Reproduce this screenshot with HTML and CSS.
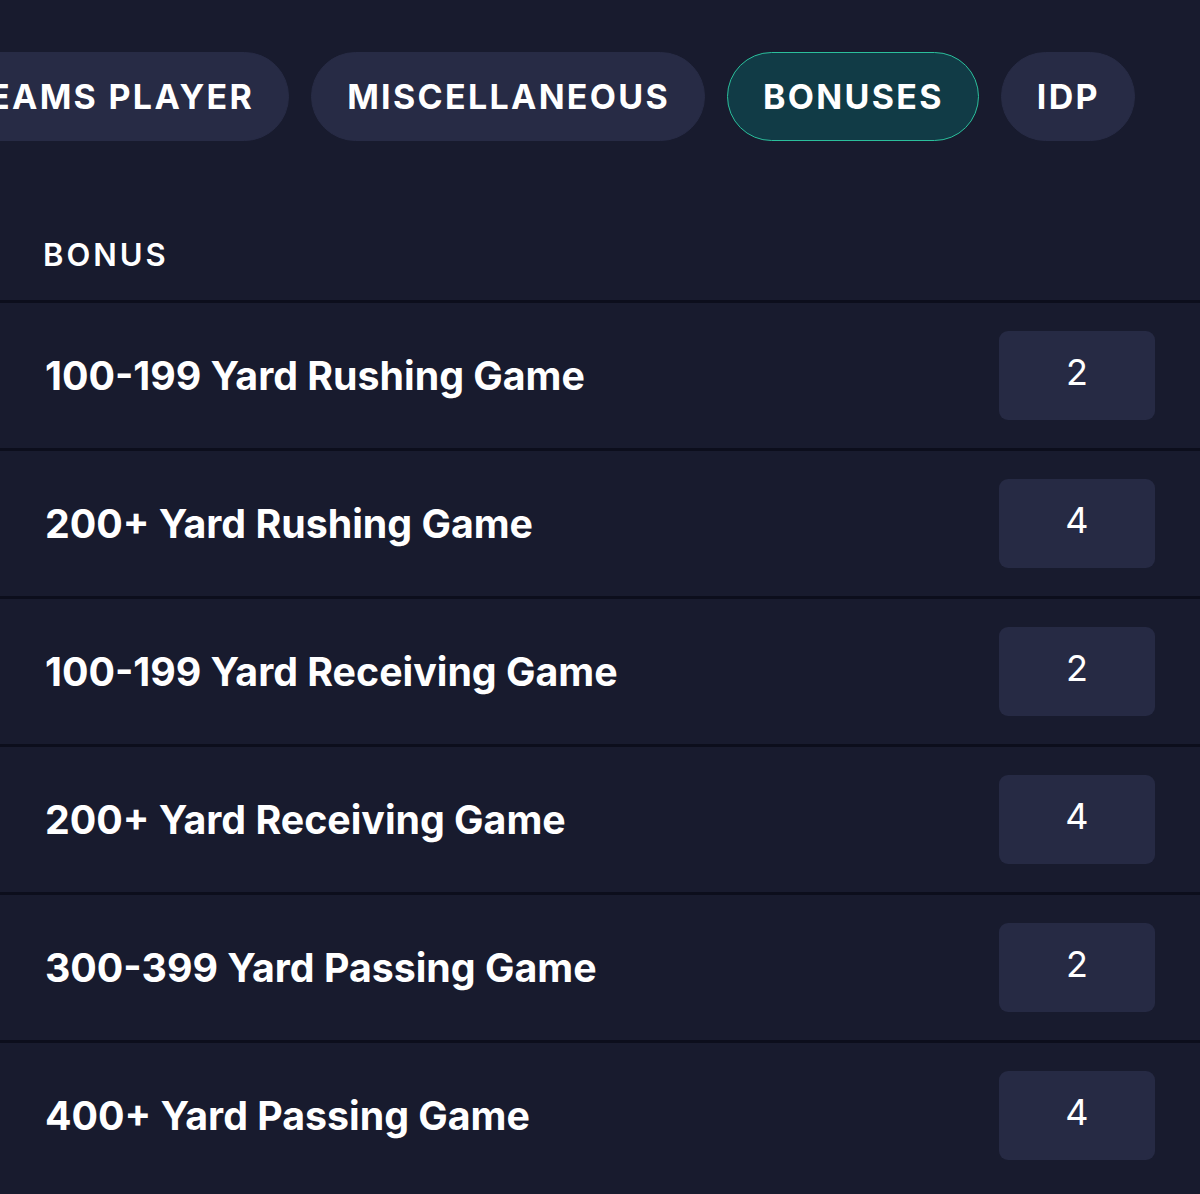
FILE: index.html
```html
<!DOCTYPE html>
<html>
<head>
<meta charset="utf-8">
<link rel="stylesheet" href="styles.css">
</head>
<body>
<div class="page">
  <nav class="tabs">
    <div class="tab">TEAMS PLAYER</div>
    <div class="tab">MISCELLANEOUS</div>
    <div class="tab active">BONUSES</div>
    <div class="tab">IDP</div>
  </nav>
  <div class="table">
    <div class="thead">BONUS</div>
    <div class="row"><span class="label">100-199 Yard Rushing Game</span><span class="val">2</span></div>
    <div class="row"><span class="label">200+ Yard Rushing Game</span><span class="val">4</span></div>
    <div class="row"><span class="label">100-199 Yard Receiving Game</span><span class="val">2</span></div>
    <div class="row"><span class="label">200+ Yard Receiving Game</span><span class="val">4</span></div>
    <div class="row"><span class="label">300-399 Yard Passing Game</span><span class="val">2</span></div>
    <div class="row"><span class="label">400+ Yard Passing Game</span><span class="val">4</span></div>
  </div>
</div>
</body>
</html>
```

FILE: styles.css
```css
html, body {
  margin: 0;
  padding: 0;
  background: #181b2e;
  overflow: hidden;
}
.page {
  width: 1200px;
  height: 1194px;
  font-family: Inter, "Noto Sans", sans-serif;
  color: #ffffff;
  overflow: hidden;
}
.tabs {
  display: flex;
  gap: 22px;
  padding-top: 52px;
  margin-left: -72px;
  white-space: nowrap;
}
.tab {
  flex: none;
  height: 89px;
  box-sizing: border-box;
  padding: 0 34px 0 35px;
  display: flex;
  align-items: center;
  border-radius: 45px;
  background: #272b45;
  border: 1px solid #272b45;
  font-size: 34px;
  font-weight: 700;
  letter-spacing: 2.3px;
}
.tab.active {
  background: #113b46;
  border-color: #2bbf9c;
}
.thead {
  height: 159px;
  box-sizing: border-box;
  padding: 68px 43px 0;
  display: flex;
  align-items: center;
  font-size: 31px;
  font-weight: 600;
  letter-spacing: 3px;
}
.row {
  height: 148px;
  box-sizing: border-box;
  border-top: 3px solid #0c0e1c;
  display: flex;
  align-items: center;
  justify-content: space-between;
  padding: 0 45px;
}
.label {
  font-size: 39.3px;
  font-weight: 700;
}
.val {
  width: 156px;
  height: 89px;
  border-radius: 9px;
  background: #262a44;
  display: flex;
  align-items: center;
  justify-content: center;
  font-size: 36px;
  font-weight: 400;
  padding-bottom: 8px;
  box-sizing: border-box;
}
```
